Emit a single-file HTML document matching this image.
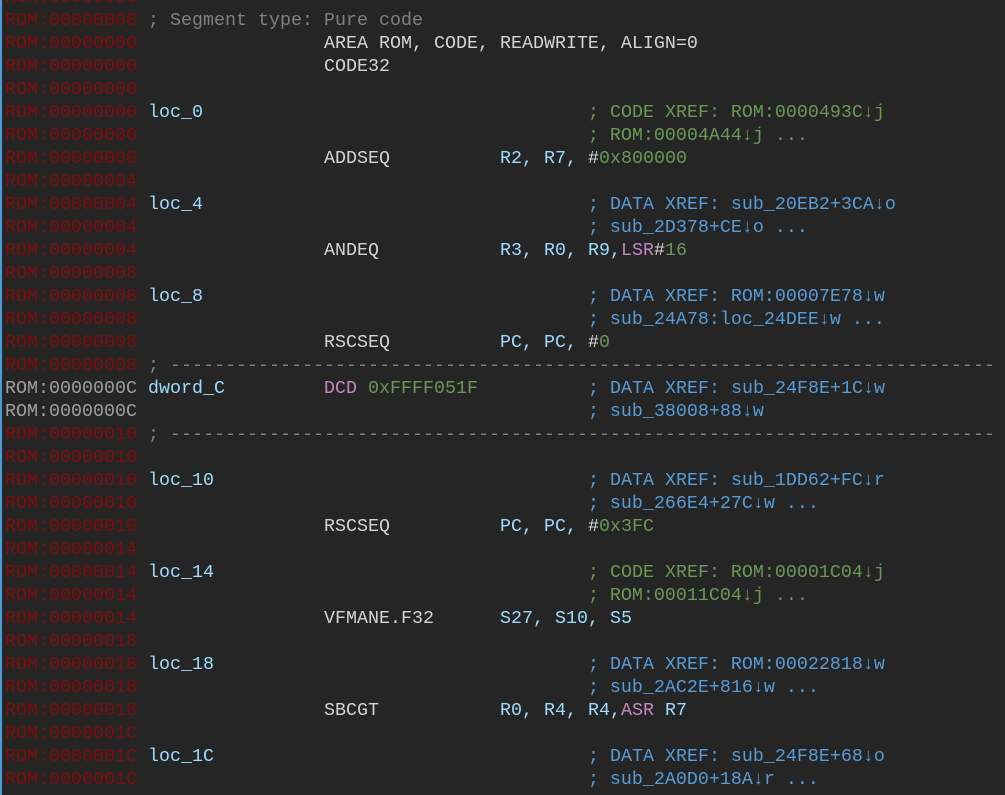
<!DOCTYPE html>
<html><head><meta charset="utf-8"><style>
html,body{margin:0;padding:0;background:#252526;width:1005px;height:795px;overflow:hidden}
.l{position:absolute;left:0;top:0;width:2px;height:795px;background:#4c9ad6}
pre{position:absolute;left:5px;top:-14px;margin:0;font-family:"Liberation Mono","DejaVu Sans Mono",monospace;font-size:18.33px;line-height:23px;color:#d4d4d4;white-space:pre}
.a{color:#800c0c}.g{color:#a0a0a0}.c{color:#808080}.lb{color:#9cdcfe}.i{color:#d4d4d4}.o{color:#9cdcfe}.n{color:#6a9955}.cx{color:#6a9955}.dx{color:#569cd6}.p{color:#c586c0}
</style></head><body><div class="l"></div>
<pre><span class="a">ROM:00000000</span>
<span class="a">ROM:00000000</span> <span class="c">; Segment type: Pure code</span>
<span class="a">ROM:00000000</span>                 <span class="i">AREA ROM, CODE, READWRITE, ALIGN=0</span>
<span class="a">ROM:00000000</span>                 <span class="i">CODE32</span>
<span class="a">ROM:00000000</span>
<span class="a">ROM:00000000</span> <span class="lb">loc_0</span>                                   <span class="cx">; CODE XREF: ROM:0000493C↓j</span>
<span class="a">ROM:00000000</span>                                         <span class="cx">; ROM:00004A44↓j ...</span>
<span class="a">ROM:00000000</span>                 <span class="i">ADDSEQ</span>          <span class="o">R2, R7, </span><span class="i">#</span><span class="n">0x800000</span>
<span class="a">ROM:00000004</span>
<span class="a">ROM:00000004</span> <span class="lb">loc_4</span>                                   <span class="dx">; DATA XREF: sub_20EB2+3CA↓o</span>
<span class="a">ROM:00000004</span>                                         <span class="dx">; sub_2D378+CE↓o ...</span>
<span class="a">ROM:00000004</span>                 <span class="i">ANDEQ</span>           <span class="o">R3, R0, R9,</span><span class="p">LSR</span><span class="i">#</span><span class="n">16</span>
<span class="a">ROM:00000008</span>
<span class="a">ROM:00000008</span> <span class="lb">loc_8</span>                                   <span class="dx">; DATA XREF: ROM:00007E78↓w</span>
<span class="a">ROM:00000008</span>                                         <span class="dx">; sub_24A78:loc_24DEE↓w ...</span>
<span class="a">ROM:00000008</span>                 <span class="i">RSCSEQ</span>          <span class="o">PC, PC, </span><span class="i">#</span><span class="n">0</span>
<span class="a">ROM:00000008</span> <span class="c">; ---------------------------------------------------------------------------</span>
<span class="g">ROM:0000000C</span> <span class="lb">dword_C</span>         <span class="p">DCD</span> <span class="n">0xFFFF051F</span>          <span class="dx">; DATA XREF: sub_24F8E+1C↓w</span>
<span class="g">ROM:0000000C</span>                                         <span class="dx">; sub_38008+88↓w</span>
<span class="a">ROM:00000010</span> <span class="c">; ---------------------------------------------------------------------------</span>
<span class="a">ROM:00000010</span>
<span class="a">ROM:00000010</span> <span class="lb">loc_10</span>                                  <span class="dx">; DATA XREF: sub_1DD62+FC↓r</span>
<span class="a">ROM:00000010</span>                                         <span class="dx">; sub_266E4+27C↓w ...</span>
<span class="a">ROM:00000010</span>                 <span class="i">RSCSEQ</span>          <span class="o">PC, PC, </span><span class="i">#</span><span class="n">0x3FC</span>
<span class="a">ROM:00000014</span>
<span class="a">ROM:00000014</span> <span class="lb">loc_14</span>                                  <span class="cx">; CODE XREF: ROM:00001C04↓j</span>
<span class="a">ROM:00000014</span>                                         <span class="cx">; ROM:00011C04↓j ...</span>
<span class="a">ROM:00000014</span>                 <span class="i">VFMANE.F32</span>      <span class="o">S27, S10, S5</span>
<span class="a">ROM:00000018</span>
<span class="a">ROM:00000018</span> <span class="lb">loc_18</span>                                  <span class="dx">; DATA XREF: ROM:00022818↓w</span>
<span class="a">ROM:00000018</span>                                         <span class="dx">; sub_2AC2E+816↓w ...</span>
<span class="a">ROM:00000018</span>                 <span class="i">SBCGT</span>           <span class="o">R0, R4, R4,</span><span class="p">ASR</span><span class="o"> R7</span>
<span class="a">ROM:0000001C</span>
<span class="a">ROM:0000001C</span> <span class="lb">loc_1C</span>                                  <span class="dx">; DATA XREF: sub_24F8E+68↓o</span>
<span class="a">ROM:0000001C</span>                                         <span class="dx">; sub_2A0D0+18A↓r ...</span>
</pre></body></html>
